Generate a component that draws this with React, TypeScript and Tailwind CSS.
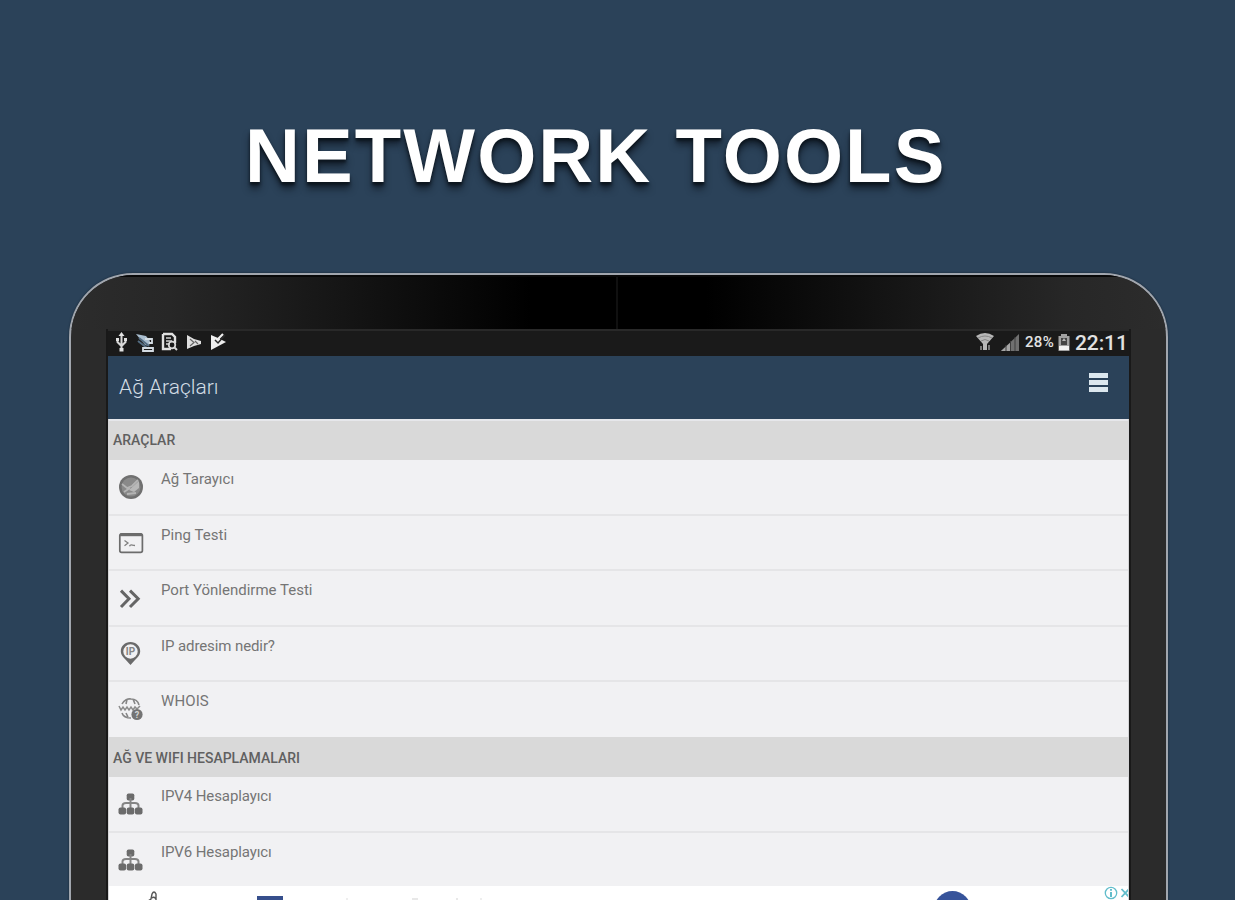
import type { ReactNode } from "react";

type Tool = {
  label: string;
  icon: ReactNode;
  spacing: string;
};

const GlobeIcon = () => (
  <svg viewBox="0 0 26 26" className="h-[26px] w-[26px]">
    <circle cx="13" cy="13" r="12" fill="#707070" />
    <circle cx="13" cy="13" r="9.5" fill="#898989" />
    <path d="M4 10 L9 14 L14 12 L20 6 M6 18 L12 14 M9 20 L18 19" fill="none" stroke="#b4b4b4" strokeWidth="1.8" />
    <path d="M11 16 L21 7 V14 L16 18 Z" fill="#b8b8b8" />
  </svg>
);

const TerminalIcon = () => (
  <svg viewBox="0 0 26 26" className="h-[26px] w-[26px]" fill="none" stroke="#6c6c6c">
    <rect x="1.8" y="3.8" width="22.6" height="18.6" rx="1.8" strokeWidth="1.7" />
    <path d="M2 4.8 H24" strokeWidth="2.8" />
    <path d="M6.5 10.5 L10 13 L6.5 15.8" stroke="#808080" strokeWidth="1.3" />
    <path d="M11.5 16.2 C12.5 13.5 14 15.5 17 15.5" stroke="#808080" strokeWidth="1.4" />
  </svg>
);

const ChevronsIcon = () => (
  <svg viewBox="0 0 26 26" className="h-[26px] w-[26px]" fill="none" stroke="#656565" strokeWidth="3">
    <path d="M3 5.6 L11 13.8 L3 22 M12 5.6 L20.2 13.8 L12 22" />
  </svg>
);

const PinIcon = () => (
  <svg viewBox="0 0 26 26" className="h-[26px] w-[26px]">
    <path
      d="M12.5 1 C7 1 2.8 5 2.8 10.2 C2.8 15.2 7.5 17.8 12.5 24 C17.5 17.8 22.2 15.2 22.2 10.2 C22.2 5 18 1 12.5 1 Z M12.5 3.3 A7.2 7.2 0 1 1 12.5 17.7 A7.2 7.2 0 1 1 12.5 3.3 Z"
      fill="#6a6a6a"
      fillRule="evenodd"
    />
    <text x="12.5" y="13.9" textAnchor="middle" fontSize="10" fontFamily="Roboto, sans-serif" fontWeight="700" fill="#858585">
      IP
    </text>
  </svg>
);

const WhoisIcon = () => (
  <svg viewBox="0 0 26 26" className="h-[26px] w-[26px]">
    <path
      d="M4 8 C6 4 10 2.5 13 3 C17 3 20 5 21 9 M9 3.5 L8 8 M15 3 L17 8 M4 17 C5 20 8 22 13 22 M8 17 L10 21"
      fill="none"
      stroke="#858585"
      strokeWidth="1.6"
    />
    <path d="M1 10 L3 14 L5 11 L7 14 L9 11 L11 14 L13 11 L15 14 L17 11 L19 13 L22 10" fill="none" stroke="#8b8b8b" strokeWidth="1.5" />
    <circle cx="19" cy="18.5" r="5.6" fill="#747474" />
    <text x="19" y="21.8" textAnchor="middle" fontSize="9" fontFamily="Roboto, sans-serif" fontWeight="700" fill="#d5d5d5">
      ?
    </text>
  </svg>
);

const SitemapIcon = () => (
  <svg viewBox="0 0 26 26" className="h-[26px] w-[26px]" fill="#6b6b6b">
    <rect x="8.7" y="2.5" width="7.6" height="7" rx="1.8" />
    <path d="M12.5 7 V18 M4.5 18 V14.5 Q4.5 12 8 12 H17 Q20.5 12 20.5 14.5 V18" fill="none" stroke="#858585" strokeWidth="2" />
    <rect x="0.5" y="16.5" width="7.6" height="7" rx="2" />
    <rect x="8.7" y="16.5" width="7.6" height="7" rx="2" />
    <rect x="16.9" y="16.5" width="7.6" height="7" rx="2" />
  </svg>
);

const tools: Tool[] = [
  { label: "Ağ Tarayıcı", icon: <GlobeIcon />, spacing: "tracking-normal" },
  { label: "Ping Testi", icon: <TerminalIcon />, spacing: "tracking-[0.05px]" },
  { label: "Port Yönlendirme Testi", icon: <ChevronsIcon />, spacing: "tracking-normal" },
  { label: "IP adresim nedir?", icon: <PinIcon />, spacing: "tracking-[-0.1px]" },
  { label: "WHOIS", icon: <WhoisIcon />, spacing: "tracking-[0.1px]" },
];

const calculators: Tool[] = [
  { label: "IPV4 Hesaplayıcı", icon: <SitemapIcon />, spacing: "tracking-[-0.1px]" },
  { label: "IPV6 Hesaplayıcı", icon: <SitemapIcon />, spacing: "tracking-[-0.1px]" },
];

const SectionTitle = ({ children, className }: { children: ReactNode; className: string }) => (
  <div className={`flex items-center bg-[#d9d9d9] pl-1 text-[14px] font-medium text-[#606060] ${className}`}>
    <span>{children}</span>
  </div>
);

const ToolList = ({ items }: { items: Tool[] }) => (
  <div className="divide-y-2 divide-[#e5e5e7] bg-[#f1f1f3]">
    {items.map((tool) => (
      <div key={tool.label} className="flex h-[55.6px] pl-[9px]">
        <div className="mt-[14px]">{tool.icon}</div>
        <span className={`ml-[17px] mt-[9px] text-[15px] leading-5 text-[#757575] ${tool.spacing}`}>{tool.label}</span>
      </div>
    ))}
  </div>
);

const StatusBar = () => (
  <div className="flex h-[27px] items-start justify-between border-t-2 border-[#292929] bg-[#1a1a1a] pl-[6px] pr-[3px] text-[#e2e2e2]">
    <svg viewBox="0 0 114 24" className="h-6 w-[114px]" fill="none">
      <path d="M7.5 4 V19 M3.5 8 V11 L7.5 15 L11.5 11 V8" stroke="#d8d8d8" strokeWidth="2" />
      <path d="M7.5 1 L10.5 5 H4.5 Z M5.5 17 H9.5 V20.5 H5.5 Z M2 7 H5 V10 H2 Z M10 7 H13 V10 H10 Z" fill="#e2e2e2" />
      <path d="M22 3 L32 5 L36 10 L35 15 L31 14 Z" fill="#a9bdce" />
      <path d="M25 7 L35 15 M24 10 L33 17" stroke="#536c82" strokeWidth="2" />
      <path d="M31 8 H38 V12 H35 M29 17 H39 V20 H29 Z" stroke="#d4dce3" strokeWidth="1.8" />
      <path d="M49 3 H58 L61 6 V12 M49 3 V18 H57" stroke="#e0e0e0" strokeWidth="2.4" />
      <path d="M52 7 H57 M52 10 H58 M52 13 H56" stroke="#cfcfcf" strokeWidth="1.6" />
      <circle cx="58" cy="14" r="3.3" stroke="#d7d7d7" strokeWidth="1.8" />
      <path d="M60 16 L63 19" stroke="#d7d7d7" strokeWidth="2" />
      <path d="M73 4 L80 8 L87 10 V13 L80 15 L73 18 Z" fill="#e0e0e0" />
      <path d="M76 8 L80 11.5 L76 15 M81 10 L84 13" stroke="#656565" strokeWidth="1.2" />
      <path d="M97 4 L104 7 L112 11 L97 19 Z" fill="#eeeeee" />
      <path d="M101 9 L104 12 L111 4" stroke="#292929" strokeWidth="1.5" />
      <path d="M104 8 L109 3" stroke="#eeeeee" strokeWidth="2.2" />
    </svg>
    <div className="flex h-[23px] items-center">
      <svg viewBox="0 0 46 24" className="h-6 w-[46px]">
        <path d="M0 5 Q9 -1 18 5 L11 13 V19 H7 V13 Z" fill="#b7b7b7" />
        <path d="M2 7 Q9 3 16 7 M5 10 Q9 7 13 10" fill="none" stroke="#858585" strokeWidth="1" />
        <path d="M5 19 V15 M13 14 V19" stroke="#777777" strokeWidth="2" />
        <path d="M25 20 L43 3 V20 Z" fill="#707070" />
        <path d="M25 20 L34 12 V20 Z" fill="#a6a6a6" />
        <path d="M30 14 V20 M34.5 10 V20 M39 6 V20" stroke="#3e3e3e" strokeWidth="1" />
      </svg>
      <span className="ml-[3px] w-[31px] text-[15px] font-medium tracking-[0.3px]">28%</span>
      <svg viewBox="0 0 14 20" className="ml-[1px] h-5 w-[14px]">
        <path d="M4 1 H10 V3 H12.5 V18 H1.5 V3 H4 Z" fill="#a1a1a1" />
        <path d="M4 5 H10 V12 H4 Z" fill="#444444" />
        <path d="M7 5 L9 8 H5 Z" fill="#b5b5b5" />
        <path d="M2 13 H12 V17 H2 Z" fill="#f3f3f3" />
      </svg>
      <span className="ml-[4px] w-[51px] whitespace-nowrap text-[21px] font-medium leading-6 tracking-[-0.1px]">22:11</span>
    </div>
  </div>
);

const AdBanner = () => (
  <div className="flex h-[16px] items-start overflow-hidden bg-white">
    <svg viewBox="0 0 14 10" className="ml-[38px] mt-[5px] h-[10px] w-[14px] shrink-0" fill="none" stroke="#555555" strokeWidth="1.4">
      <path d="M1 10 L4 8 L5 3 Q7 -1 9 3 V10 M5 7 Q7 5 9 8" />
    </svg>
    <div className="ml-[96px] mt-[10px] h-2 w-[26px] shrink-0 bg-[#364f8c]" />
    <div className="ml-[63px] mt-[12px] h-1 w-[2px] shrink-0 bg-[#eeeeee]" />
    <div className="ml-[64px] mt-[12px] h-1 w-[6px] shrink-0 bg-[#e8e8e8]" />
    <div className="ml-[38px] mt-[12px] h-1 w-[2px] shrink-0 bg-[#e8e8e8]" />
    <div className="ml-[22px] mt-[12px] h-1 w-[2px] shrink-0 bg-[#eeeeee]" />
    <div className="ml-auto mt-[5px] h-[37px] w-[37px] shrink-0 rounded-full bg-[#36539a]" />
    <svg viewBox="0 0 28 14" className="ml-[129px] h-[14px] w-7 shrink-0" fill="none" stroke="#62bdcb">
      <circle cx="11" cy="7" r="5.7" strokeWidth="1.3" />
      <path d="M11 3 V4.8 M11 6 V11" strokeWidth="2" />
      <path d="M21.5 3 L29 11 M29 3 L21.5 11" strokeWidth="1.8" />
    </svg>
  </div>
);

const App = () => {
  return (
    <div className="flex h-[900px] w-[1235px] flex-col overflow-hidden bg-[#2b4259] font-[Roboto,sans-serif]">
      <h1 className="ml-[245px] mt-[110px] h-[163px] whitespace-nowrap font-['Liberation_Sans',sans-serif] text-[76px] font-bold leading-[91px] tracking-[2.1px] text-white [text-shadow:0_3px_3px_#0c151e,0_7px_7px_rgba(12,20,29,0.65)]">
        NETWORK TOOLS
      </h1>

      <div className="ml-[69px] h-[627px] w-[1099px] overflow-hidden rounded-t-[64px] border-2 border-b-0 border-[#a1a6ae] bg-[#2b2b2b] shadow-[0_0_2px_#152330]">
        <div className="flex h-[54px] justify-center border-t-2 border-[#080808] bg-[linear-gradient(90deg,#2c2c2c_0%,#272727_9%,#161616_24%,#000000_42%,#000000_58%,#161616_76%,#272727_91%,#2c2c2c_100%)]">
          <div className="mr-[3px] w-[2px] bg-[#101010]" />
        </div>
        <div className="mx-[35px] border-x-2 border-[#191919]">
          <StatusBar />
          <header className="flex h-[63px] justify-between bg-[#2b4259] pl-[11px] pr-[21px]">
            <span className="mt-[19px] text-[21px] font-light leading-6 text-[#d3dde5]">Ağ Araçları</span>
            <div className="mt-[17px] flex w-[19px] flex-col gap-[2px]">
              <div className="h-[5px] bg-[#dce7ee]" />
              <div className="h-[5px] bg-[#dce7ee]" />
              <div className="h-[5px] bg-[#dce7ee]" />
            </div>
          </header>
          <main className="border-x border-[#d5d5d7]">
            <div className="grid h-[41px] border-t-2 border-[#e6e7eb]">
              <SectionTitle className="pt-0">ARAÇLAR</SectionTitle>
            </div>
            <div className="h-[277px] overflow-hidden">
              <ToolList items={tools} />
            </div>
            <div className="grid h-[40px]">
              <SectionTitle className="pt-[2px]">AĞ VE WIFI HESAPLAMALARI</SectionTitle>
            </div>
            <div className="h-[109px] overflow-hidden">
              <ToolList items={calculators} />
            </div>
            <AdBanner />
          </main>
        </div>
      </div>
    </div>
  );
};

export default App;
